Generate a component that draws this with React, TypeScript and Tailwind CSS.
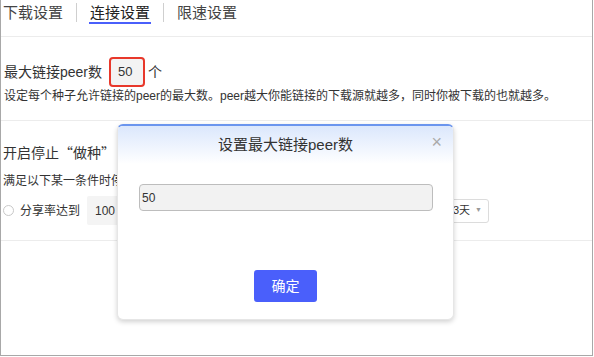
import React from "react";

const font = { fontFamily: '"Liberation Sans","Noto Sans CJK SC",sans-serif' };
const cjk = { fontFamily: '"Noto Sans CJK SC","Liberation Sans",sans-serif' };

export default function App() {
  return (
    <div
      className="relative w-[593px] h-[356px] overflow-hidden bg-white border-l border-r border-b border-[#a8a8a8] text-[#333]"
      style={font}
    >
      {/* Tabs */}
      <div className="flex items-start h-[37px] border-b border-[#ececec] pl-[2px]">
        <div className="h-[24px] pt-[4px] text-[15px] leading-[17px] text-[#444]">下载设置</div>
        <div className="w-px h-[19px] mt-[3px] bg-[#cfcfcf] mx-[13px]" />
        <div className="h-[24px] pt-[4px] text-[15px] leading-[17px] text-[#222] border-b-2 border-[#4a5ffb] px-[1px] -mx-[1px]">
          连接设置
        </div>
        <div className="w-px h-[19px] mt-[3px] bg-[#cfcfcf] mx-[13px]" />
        <div className="h-[24px] pt-[4px] text-[15px] leading-[17px] text-[#444]">限速设置</div>
      </div>

      {/* Section 1 */}
      <div className="pt-[20px] pb-[16px] pl-[3px] border-b border-[#ececec]">
        <div className="flex items-center h-[30px]">
          <span className="text-[14px] leading-[20px]">最大链接peer数</span>
          <div className="ml-[7px] w-[36px] h-[30px] rounded-[4px] border-2 border-[#e8382b] bg-[#f3f3f3] flex items-center pl-[7px] text-[13px]">
            50
          </div>
          <span className="ml-[3px] text-[14px] leading-[20px]">个</span>
        </div>
        <div className="mt-[1px] text-[12px] leading-[16px] whitespace-nowrap">
          设定每个种子允许链接的peer的最大数。peer越大你能链接的下载源就越多，同时你被下载的也就越多。
        </div>
      </div>

      {/* Section 2 */}
      <div className="pt-[21px] pb-[15px] pl-[2px] border-b border-[#ececec]">
        <div className="text-[14px] leading-[20px]" style={cjk}>开启停止“做种”</div>
        <div className="mt-[11px] text-[12px] leading-[16px]">满足以下某一条件时停止做种</div>
        <div className="mt-[7px] flex items-center h-[29px] w-[486px]">
          <div className="w-[11px] h-[11px] rounded-full border border-[#c8c8c8] bg-white" />
          <span className="ml-[6px] text-[12px] leading-[16px]">分享率达到</span>
          <div className="ml-[7px] w-[70px] h-[29px] bg-[#f4f4f4] rounded-[2px] flex items-center pl-[8px] text-[12px]">
            100
          </div>
          <div className="ml-auto w-[50px] h-[24px] border border-[#dcdcdc] rounded-[3px] bg-white flex items-center justify-end pr-[6px] text-[11px] gap-[5px]">
            <span>3天</span>
            <span className="text-[7px] text-[#999]">▼</span>
          </div>
        </div>
      </div>

      {/* Modal */}
      <div className="absolute left-[116px] top-[124px] w-[337px] h-[196px] bg-white rounded-[6px] border border-[#e6e6e6] border-t-2 border-t-[#6b95ee] shadow-[0_2px_5px_rgba(0,0,0,0.18)] overflow-hidden">
        <div className="relative h-[38px] bg-gradient-to-b from-[#dbe7fc] to-white flex items-center justify-center">
          <span className="text-[15px] leading-[20px] text-[#333]">设置最大链接peer数</span>
          <span className="absolute right-[11px] top-[7px] text-[18px] leading-[18px] text-[#aaa] font-light">×</span>
        </div>
        <div className="ml-[21px] mt-[20px] w-[294px] h-[27px] bg-[#f2f2f2] border border-[#bdbdbd] rounded-[4px] flex items-center pl-[2px] text-[12px]">
          50
        </div>
        <div className="mt-[59px] flex justify-center">
          <div className="w-[63px] h-[32px] bg-[#4a5ffb] rounded-[3px] flex items-center justify-center text-white text-[14px]">
            确定
          </div>
        </div>
      </div>
    </div>
  );
}
